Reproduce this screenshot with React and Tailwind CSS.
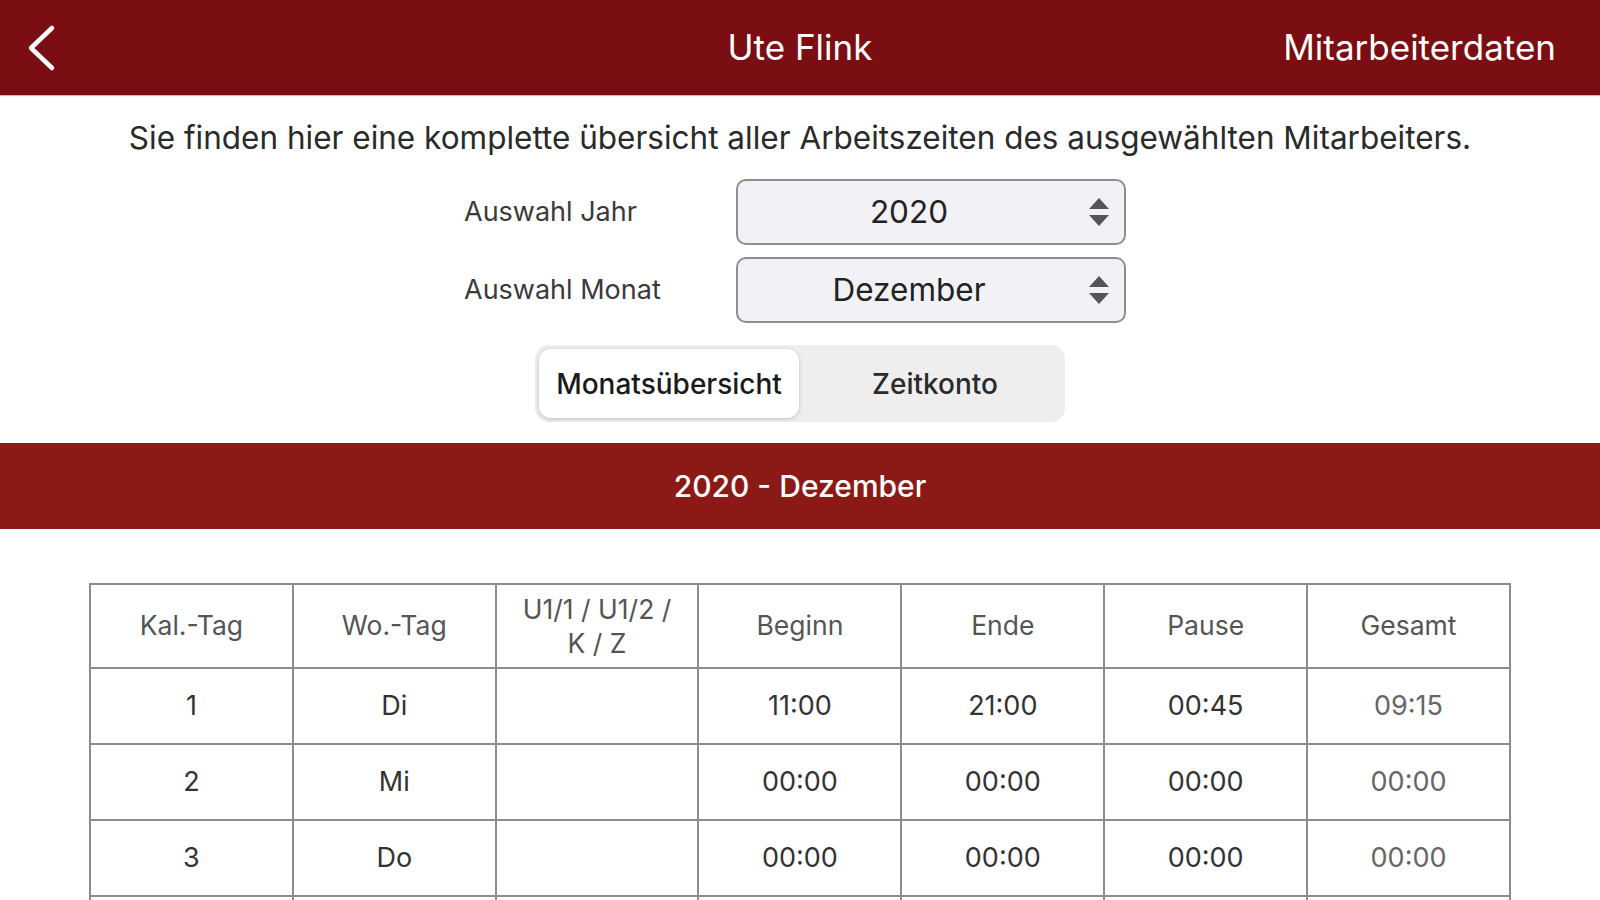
import React from 'react'

const ROWS = [
  { day: '1', wd: 'Di', code: '', start: '11:00', end: '21:00', pause: '00:45', total: '09:15' },
  { day: '2', wd: 'Mi', code: '', start: '00:00', end: '00:00', pause: '00:00', total: '00:00' },
  { day: '3', wd: 'Do', code: '', start: '00:00', end: '00:00', pause: '00:00', total: '00:00' },
]

function Stepper() {
  return (
    <svg width="22" height="30" viewBox="0 0 22 30" className="shrink-0">
      <path d="M11 1 L21 12 L1 12 Z" fill="#555" />
      <path d="M11 29 L21 18 L1 18 Z" fill="#555" />
    </svg>
  )
}

function Select({ value }) {
  return (
    <div className="w-[390px] h-[66px] rounded-[10px] border-2 border-[#8e8e8e] bg-[#f2f2f6] flex items-center pl-4 pr-[14px]">
      <span className="flex-1 text-center text-[31.5px] text-[#222] pr-[24px]">{value}</span>
      <Stepper />
    </div>
  )
}

function FormRow({ label, value }) {
  return (
    <div className="flex items-center">
      <span className="w-[272px] text-[27px] text-[#3a3a3a]">{label}</span>
      <Select value={value} />
    </div>
  )
}

export default function App() {
  const cell = 'border-2 border-[#8c8c8c] text-center align-middle w-[203px]'
  return (
    <div className="w-[1600px] h-[900px] overflow-hidden bg-white" style={{ fontFamily: 'Inter, "Noto Sans", sans-serif' }}>
      <header className="h-[95px] bg-[#7a0e12] grid grid-cols-[1fr_auto_1fr] items-center shadow-[0_1px_1px_rgba(0,0,0,0.25)]">
        <div className="pl-[26px] flex items-center">
          <svg width="30" height="48" viewBox="0 0 30 48">
            <path d="M26 4 L5 24 L26 44" fill="none" stroke="#fff" strokeWidth="4.5" strokeLinecap="round" strokeLinejoin="round" />
          </svg>
        </div>
        <h1 className="text-white text-[35px] leading-none">Ute Flink</h1>
        <div className="flex justify-end pr-[44px] text-white text-[35px] leading-none">Mitarbeiterdaten</div>
      </header>

      <p className="mt-[24px] text-center text-[31.5px] leading-[38px] text-[#2a2a2a]">
        Sie finden hier eine komplette übersicht aller Arbeitszeiten des ausgewählten Mitarbeiters.
      </p>

      <div className="ml-[464px] mt-[22px] flex flex-col gap-[12px]">
        <FormRow label="Auswahl Jahr" value="2020" />
        <FormRow label="Auswahl Monat" value="Dezember" />
      </div>

      <div className="mt-[22px] mx-auto w-[530px] h-[77px] rounded-[14px] bg-[#eeeeef] p-[4px] flex">
        <div className="w-[260px] rounded-[12px] bg-white shadow-[0_1px_4px_rgba(0,0,0,0.2)] flex items-center justify-center text-[28px] font-medium text-[#1a1a1a]">
          Monatsübersicht
        </div>
        <div className="flex-1 flex items-center justify-center text-[28px] font-medium text-[#2a2a2a] pl-[10px]">Zeitkonto</div>
      </div>

      <div className="mt-[21px] h-[86px] bg-[#8b1915] flex items-center justify-center text-white text-[30px] font-medium">
        2020 - Dezember
      </div>

      <table className="mt-[54px] mx-auto w-[1422px] border-collapse">
        <thead>
          <tr className="h-[84px] text-[26.5px] text-[#555]">
            <th className={`${cell} font-normal`}>Kal.-Tag</th>
            <th className={`${cell} font-normal`}>Wo.-Tag</th>
            <th className={`${cell} font-normal leading-[34px]`}>U1/1 / U1/2 /<br />K / Z</th>
            <th className={`${cell} font-normal`}>Beginn</th>
            <th className={`${cell} font-normal`}>Ende</th>
            <th className={`${cell} font-normal`}>Pause</th>
            <th className={`${cell} font-normal`}>Gesamt</th>
          </tr>
        </thead>
        <tbody>
          {ROWS.map((r) => (
            <tr key={r.day} className="h-[76px] text-[27px] text-[#333]">
              <td className={cell}>{r.day}</td>
              <td className={cell}>{r.wd}</td>
              <td className={cell}>{r.code}</td>
              <td className={cell}>{r.start}</td>
              <td className={cell}>{r.end}</td>
              <td className={cell}>{r.pause}</td>
              <td className={`${cell} text-[#666]`}>{r.total}</td>
            </tr>
          ))}
          <tr className="h-[76px]">
            {Array.from({ length: 7 }).map((_, i) => (
              <td key={i} className={cell} />
            ))}
          </tr>
        </tbody>
      </table>
    </div>
  )
}
